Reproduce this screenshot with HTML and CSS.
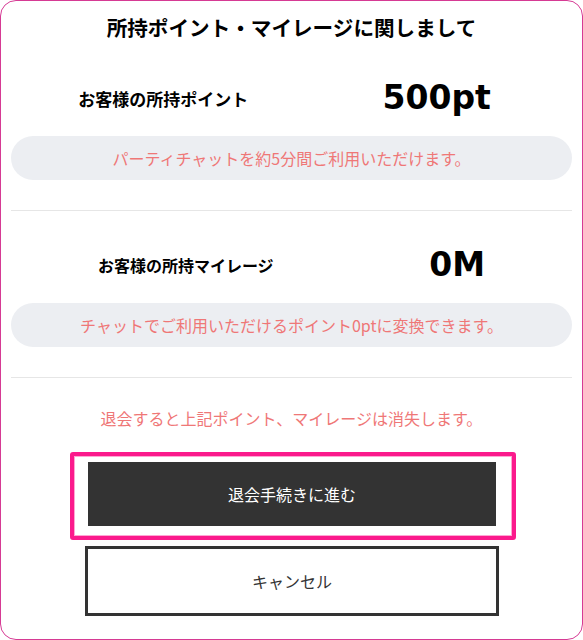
FILE: index.html
```html
<!DOCTYPE html>
<html lang="ja">
<head>
<meta charset="utf-8">
<link rel="stylesheet" href="styles.css">
</head>
<body>
<div class="card">
  <h1 class="title">所持ポイント・マイレージに関しまして</h1>
  <div class="row row-first">
    <div class="label">お客様の所持ポイント</div>
    <div class="value">500pt</div>
  </div>
  <div class="pill">パーティチャットを約5分間ご利用いただけます。</div>
  <div class="divider"></div>
  <div class="row row-second">
    <div class="label">お客様の所持マイレージ</div>
    <div class="value">0M</div>
  </div>
  <div class="pill">チャットでご利用いただけるポイント0ptに変換できます。</div>
  <div class="divider"></div>
  <p class="notice">退会すると上記ポイント、マイレージは消失します。</p>
  <div class="focus-ring">
    <button class="btn-primary">退会手続きに進む</button>
  </div>
  <button class="btn-cancel">キャンセル</button>
</div>
</body>
</html>
```
FILE: styles.css
```css
* { box-sizing: border-box; }
html, body { margin: 0; padding: 0; background: #ffffff; }
body {
  font-family: "Noto Sans CJK JP", "Noto Sans", sans-serif;
  color: #000;
}
.card {
  width: 583px;
  height: 640px;
  border: 1px solid #d63a94;
  border-radius: 16px;
  padding: 0 10px;
  overflow: hidden;
}
.title {
  margin: 11px 0 0;
  font-size: 20.6px;
  line-height: 30px;
  font-weight: 700;
  text-align: center;
}
.row {
  display: flex;
  justify-content: space-around;
  align-items: center;
  height: 60px;
}
.row-first { margin-top: 26px; padding-right: 14px; }
.row-second { margin-top: 24px; padding: 0 9px; }
.label {
  font-size: 17px;
  font-weight: 700;
}
.row-second .label { font-size: 16px; }
.value {
  font-family: "DejaVu Sans", "Noto Sans", sans-serif;
  font-size: 33px;
  font-weight: 700;
  line-height: 60px;
}
.pill {
  margin-top: 8px;
  height: 44px;
  line-height: 44px;
  border-radius: 22px;
  background: #eceef2;
  color: #ef7777;
  font-size: 16px;
  text-align: center;
}
.divider {
  margin-top: 30px;
  border-top: 1px solid #e6e6e6;
}
.notice {
  margin: 28px 0 0;
  line-height: 24px;
  font-size: 16px;
  color: #ef7777;
  text-align: center;
}
.focus-ring {
  margin: 22px 0 0 59px;
  width: 446px;
  height: 88px;
  border: 4px solid #fb1a8c;
  border-radius: 3px;
  box-shadow: inset 0 0 0 1px #ffa6d3;
  padding: 6px 16px 10px 14px;
}
.btn-primary {
  display: block;
  width: 100%;
  height: 64px;
  border: none;
  background: #333333;
  color: #ffffff;
  font-family: inherit;
  font-size: 16px;
}
.btn-cancel {
  display: block;
  margin: 6px 0 0 74px;
  width: 414px;
  height: 70px;
  border: 3px solid #333333;
  background: #ffffff;
  color: #333333;
  font-family: inherit;
  font-size: 16px;
}
```
